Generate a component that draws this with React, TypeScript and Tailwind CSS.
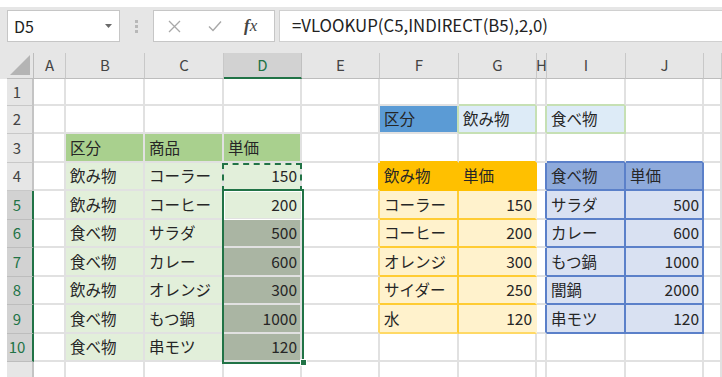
import React from "react";

type Cell = { t?: string; n?: boolean; bg?: string; r?: string; b?: string };

const COLS = ["A", "B", "C", "D", "E", "F", "G", "H", "I", "J", "K"];
const ROWS = [1, 2, 3, 4, 5, 6, 7, 8, 9, 10, 11];

const G_HEAD = "bg-[#a9d08e]";
const G_BODY = "bg-[#e2efda]";
const SEL = "bg-[#aab5a3]";
const O_HEAD = "bg-[#ffc000]";
const O_BODY = "bg-[#fff2cc]";
const B_HEAD = "bg-[#8eaadb]";
const B_BODY = "bg-[#d9e1f2]";

const cells: Record<string, Cell> = {
  // lookup keys
  F2: { t: "区分", bg: "bg-[#5b9bd5]", r: "border-r-[#c6e0b4]" },
  G1: { b: "border-b-[#c6e0b4]" },
  G2: { t: "飲み物", bg: "bg-[#ddebf7]", r: "border-r-[#c6e0b4]", b: "border-b-[#c6e0b4]" },
  H2: { r: "border-r-[#c6e0b4]" },
  I1: { b: "border-b-[#c6e0b4]" },
  I2: { t: "食べ物", bg: "bg-[#ddebf7]", r: "border-r-[#c6e0b4]", b: "border-b-[#c6e0b4]" },

  // left table
  B3: { t: "区分", bg: G_HEAD },
  C3: { t: "商品", bg: G_HEAD },
  D3: { t: "単価", bg: G_HEAD },
  B4: { t: "飲み物", bg: G_BODY },
  C4: { t: "コーラー", bg: G_BODY },
  D4: { t: "150", n: true, bg: G_BODY },
  B5: { t: "飲み物", bg: G_BODY },
  C5: { t: "コーヒー", bg: G_BODY },
  D5: { t: "200", n: true, bg: G_BODY },
  B6: { t: "食べ物", bg: G_BODY },
  C6: { t: "サラダ", bg: G_BODY },
  D6: { t: "500", n: true, bg: SEL },
  B7: { t: "食べ物", bg: G_BODY },
  C7: { t: "カレー", bg: G_BODY },
  D7: { t: "600", n: true, bg: SEL },
  B8: { t: "飲み物", bg: G_BODY },
  C8: { t: "オレンジ", bg: G_BODY },
  D8: { t: "300", n: true, bg: SEL },
  B9: { t: "食べ物", bg: G_BODY },
  C9: { t: "もつ鍋", bg: G_BODY },
  D9: { t: "1000", n: true, bg: SEL },
  B10: { t: "食べ物", bg: G_BODY },
  C10: { t: "串モツ", bg: G_BODY },
  D10: { t: "120", n: true, bg: SEL },

  // drinks table
  E4: { r: "border-r-[#ffc000]" },
  E5: { r: "border-r-[#ffd966]" },
  E6: { r: "border-r-[#ffd966]" },
  E7: { r: "border-r-[#ffd966]" },
  E8: { r: "border-r-[#ffd966]" },
  E9: { r: "border-r-[#ffd966]" },
  F3: { b: "border-b-[#ffc000]" },
  G3: { b: "border-b-[#ffc000]" },
  F4: { t: "飲み物", bg: O_HEAD, r: "border-r-[#ffc000]", b: "border-b-[#ffc000]" },
  G4: { t: "単価", bg: O_HEAD, r: "border-r-[#ffc000]", b: "border-b-[#ffc000]" },
  F5: { t: "コーラー", bg: O_BODY, r: "border-r-[#ffcc33]", b: "border-b-[#ffcc33]" },
  G5: { t: "150", n: true, bg: O_BODY, r: "border-r-[#fff2cc]", b: "border-b-[#ffcc33]" },
  F6: { t: "コーヒー", bg: O_BODY, r: "border-r-[#ffcc33]", b: "border-b-[#ffcc33]" },
  G6: { t: "200", n: true, bg: O_BODY, r: "border-r-[#fff2cc]", b: "border-b-[#ffcc33]" },
  F7: { t: "オレンジ", bg: O_BODY, r: "border-r-[#ffcc33]", b: "border-b-[#ffcc33]" },
  G7: { t: "300", n: true, bg: O_BODY, r: "border-r-[#fff2cc]", b: "border-b-[#ffcc33]" },
  F8: { t: "サイダー", bg: O_BODY, r: "border-r-[#ffcc33]", b: "border-b-[#ffcc33]" },
  G8: { t: "250", n: true, bg: O_BODY, r: "border-r-[#fff2cc]", b: "border-b-[#ffcc33]" },
  F9: { t: "水", bg: O_BODY, r: "border-r-[#ffcc33]", b: "border-b-[#ffd966]" },
  G9: { t: "120", n: true, bg: O_BODY, r: "border-r-[#fff2cc]", b: "border-b-[#ffd966]" },

  // food table
  H4: { r: "border-r-[#5b80c9]" },
  H5: { r: "border-r-[#5b80c9]" },
  H6: { r: "border-r-[#5b80c9]" },
  H7: { r: "border-r-[#5b80c9]" },
  H8: { r: "border-r-[#5b80c9]" },
  H9: { r: "border-r-[#5b80c9]" },
  I3: { b: "border-b-[#5b80c9]" },
  J3: { b: "border-b-[#5b80c9]" },
  I4: { t: "食べ物", bg: B_HEAD, r: "border-r-[#5b80c9]", b: "border-b-[#5b80c9]" },
  J4: { t: "単価", bg: B_HEAD, r: "border-r-[#5b80c9]", b: "border-b-[#5b80c9]" },
  I5: { t: "サラダ", bg: B_BODY, r: "border-r-[#5b80c9]", b: "border-b-[#5b80c9]" },
  J5: { t: "500", n: true, bg: B_BODY, r: "border-r-[#5b80c9]", b: "border-b-[#5b80c9]" },
  I6: { t: "カレー", bg: B_BODY, r: "border-r-[#5b80c9]", b: "border-b-[#5b80c9]" },
  J6: { t: "600", n: true, bg: B_BODY, r: "border-r-[#5b80c9]", b: "border-b-[#5b80c9]" },
  I7: { t: "もつ鍋", bg: B_BODY, r: "border-r-[#5b80c9]", b: "border-b-[#5b80c9]" },
  J7: { t: "1000", n: true, bg: B_BODY, r: "border-r-[#5b80c9]", b: "border-b-[#5b80c9]" },
  I8: { t: "闇鍋", bg: B_BODY, r: "border-r-[#5b80c9]", b: "border-b-[#5b80c9]" },
  J8: { t: "2000", n: true, bg: B_BODY, r: "border-r-[#5b80c9]", b: "border-b-[#5b80c9]" },
  I9: { t: "串モツ", bg: B_BODY, r: "border-r-[#5b80c9]", b: "border-b-[#5b80c9]" },
  J9: { t: "120", n: true, bg: B_BODY, r: "border-r-[#5b80c9]", b: "border-b-[#5b80c9]" },
};

function FormulaBar() {
  return (
    <div className="h-[53px] bg-[#e6e6e6] border-t-[7px] border-white flex items-start pt-[3px]">
      <div className="ml-[7px] w-[113px] h-[32px] bg-white border border-[#c6c6c6] flex items-center justify-between pl-[6px] pr-[7px]">
        <span className="text-[16px] text-[#222]">D5</span>
        <svg width="7" height="4" viewBox="0 0 7 4">
          <path d="M0 0 L7 0 L3.5 4 Z" fill="#6a6a6a" />
        </svg>
      </div>
      <div className="w-[33px] h-[32px] flex items-center justify-center">
        <svg width="3" height="13" viewBox="0 0 3 13">
          <rect x="0" y="0" width="3" height="3" fill="#b8b8b8" />
          <rect x="0" y="5" width="3" height="3" fill="#b8b8b8" />
          <rect x="0" y="10" width="3" height="3" fill="#b8b8b8" />
        </svg>
      </div>
      <div className="w-[122px] h-[32px] bg-white border border-[#c6c6c6] flex items-center pl-[14px]">
        <svg width="13" height="13" viewBox="0 0 13 13">
          <path d="M1 1 L12 12 M12 1 L1 12" stroke="#a8a8a8" strokeWidth="1.3" />
        </svg>
        <svg width="14" height="12" viewBox="0 0 14 12" className="ml-[27px]">
          <path d="M1 6.5 L5 10.5 L13 1.5" stroke="#a8a8a8" strokeWidth="1.4" fill="none" />
        </svg>
        <span className="ml-[22px] text-[17px] italic text-[#444] font-['Liberation_Serif',serif]">
          <span className="font-bold">f</span>x
        </span>
      </div>
      <div className="ml-[4px] flex-1 h-[32px] bg-white border border-[#d0d0d0] border-r-0 flex items-center pl-[12px]">
        <span className="text-[16.8px] text-[#222]">=VLOOKUP(C5,INDIRECT(B5),2,0)</span>
      </div>
    </div>
  );
}

export default function App() {
  return (
    <div className="w-[722px] h-[377px] overflow-hidden bg-white font-['Noto_Sans_CJK_JP',sans-serif] text-[#262626]">
      <FormulaBar />
      <div className="relative grid grid-cols-[7px_27px_32px_79px_79px_78px_78px_79px_78px_10px_79px_78px_18px] grid-rows-[26px_27px_28px_29px_28px_29px_28px_29px_28px_29px_28px_20px]">
        {/* header row */}
        <div className="bg-[#e6e6e6]" />
        <div className="bg-[#e6e6e6] border-r border-b border-[#bdbdbd] relative">
          <svg width="20" height="20" viewBox="0 0 20 20" className="absolute right-[3px] bottom-[3px]">
            <path d="M20 0 L20 20 L0 20 Z" fill="#b4b4b4" />
          </svg>
        </div>
        {COLS.map((c) =>
          c === "D" ? (
            <div
              key={c}
              className="bg-[#d2d2d2] border-r border-r-[#c0c0c0] border-b-2 border-b-[#217346] flex items-center justify-center text-[15px] text-[#217346]"
            >
              {c}
            </div>
          ) : (
            <div
              key={c}
              className="bg-[#e6e6e6] border-r border-r-[#c8c8c8] border-b border-b-[#bdbdbd] flex items-center justify-center overflow-hidden text-[15px] text-[#444]"
            >
              {c === "K" ? "" : c}
            </div>
          )
        )}

        {/* body rows */}
        {ROWS.map((r) => {
          const selected = r >= 5 && r <= 10;
          return (
            <React.Fragment key={r}>
              <div className="bg-white" />
              {selected ? (
                <div className="bg-[#d2d2d2] border-r-2 border-r-[#217346] border-b border-b-[#bdbdbd] flex items-center justify-center pr-[5px] text-[15px] text-[#217346]">
                  {r}
                </div>
              ) : (
                <div className="bg-[#e6e6e6] border-r-2 border-r-[#c4c4c4] border-b border-b-[#c8c8c8] flex items-center justify-center pr-[5px] text-[15px] text-[#444]">
                  {r === 11 ? "" : r}
                </div>
              )}
              {COLS.map((c) => {
                const cell = cells[c + r] || {};
                return (
                  <div
                    key={c}
                    className={`border-r-2 border-b-2 ${cell.r ?? "border-r-[#e1e1e1]"} ${cell.b ?? "border-b-[#e1e1e1]"} ${
                      cell.bg ?? "bg-white"
                    } flex items-center overflow-hidden whitespace-nowrap text-[15.5px] ${
                      cell.n ? "justify-end pr-[3px]" : "justify-start pl-[4px]"
                    }`}
                  >
                    {cell.t}
                  </div>
                );
              })}
            </React.Fragment>
          );
        })}

        {/* copy marquee around D4 */}
        <div className="absolute left-[222px] top-[110px] w-[80px] h-[29px] border-2 border-dashed border-[#217346] pointer-events-none" />
        {/* selection D5:D10 */}
        <div className="absolute left-[222px] top-[136px] w-[82px] h-[175px] border-2 border-[#217346] pointer-events-none">
          <div className="absolute left-0 top-0 w-[78px] h-[29px] border border-white" />
        </div>
        <div className="absolute left-[300px] top-[306px] w-[7px] h-[7px] bg-[#217346] border border-white" />
      </div>
    </div>
  );
}
